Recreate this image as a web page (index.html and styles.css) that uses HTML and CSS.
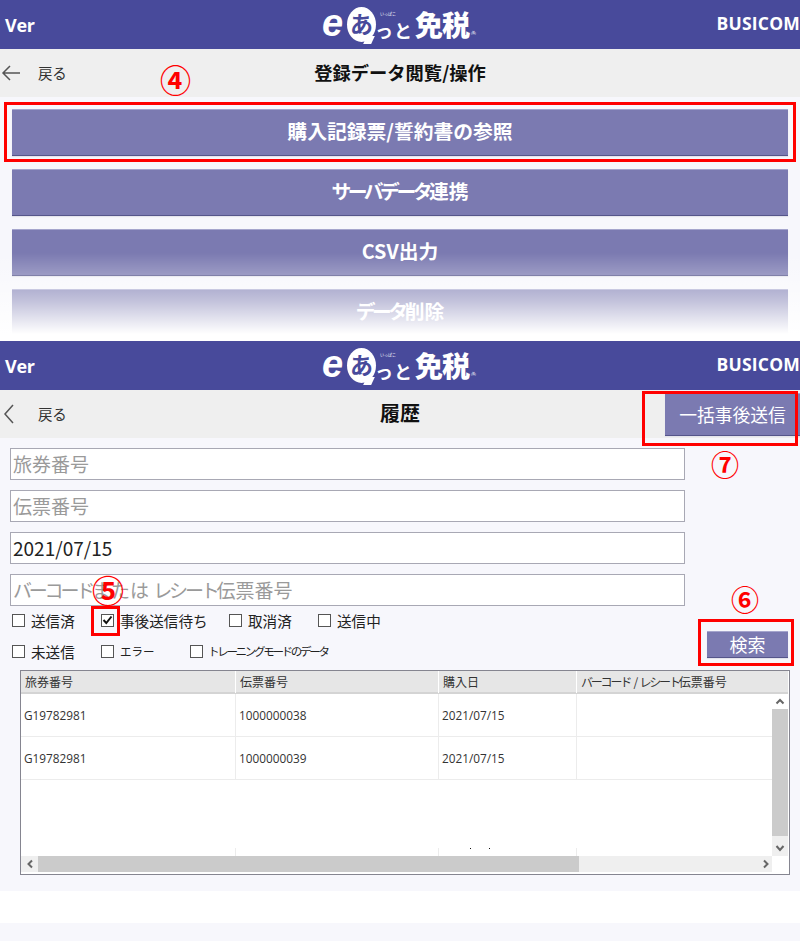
FILE: index.html
```html
<!DOCTYPE html>
<html lang="ja">
<head>
<meta charset="utf-8">
<title>eあっと免税</title>
<link rel="stylesheet" href="styles.css">
</head>
<body>
<section class="screen screen-menu">
  <header class="topbar">
    <span class="ver">Ver</span>
    <div class="logo"><span class="logo-e">e</span><span class="logo-bubble">あ</span><span class="logo-kana">っと</span><span class="logo-kanji">免税</span><span class="logo-ruby">いっぱこ</span><span class="logo-mark">(株)</span></div>
    <span class="brand">BUSICOM</span>
  </header>
  <div class="subbar">
    <div class="back"><svg class="back-icon" width="20" height="16" viewBox="0 0 20 16"><path d="M9 1 2 8l7 7M2 8h17" fill="none" stroke="#555" stroke-width="1.500"/></svg><span>戻る</span></div>
    <h1 class="title">登録データ閲覧/操作</h1>
  </div>
  <div class="menu">
    <button class="menu-btn">購入記録票/誓約書の参照</button>
    <button class="menu-btn"><span class="tight">サーバデータ</span>連携</button>
    <button class="menu-btn">CSV出力</button>
    <button class="menu-btn"><span class="tight">データ</span>削除</button>
  </div>
  <div class="fade"></div>
  <div class="mark mark-4"></div>
  <span class="num num-4">④</span>
</section>

<section class="screen screen-history">
  <header class="topbar">
    <span class="ver">Ver</span>
    <div class="logo"><span class="logo-e">e</span><span class="logo-bubble">あ</span><span class="logo-kana">っと</span><span class="logo-kanji">免税</span><span class="logo-ruby">いっぱこ</span><span class="logo-mark">(株)</span></div>
    <span class="brand">BUSICOM</span>
  </header>
  <div class="subbar">
    <div class="back"><svg class="back-icon" width="20" height="22" viewBox="0 0 20 22"><path d="M12 2 4 11l8 9" fill="none" stroke="#555" stroke-width="1.500"/></svg><span>戻る</span></div>
    <h1 class="title title-large">履歴</h1>
    <button class="bulk-btn">一括事後送信</button>
  </div>
  <div class="form">
    <div class="fields">
      <div class="field placeholder">旅券番号</div>
      <div class="field placeholder">伝票番号</div>
      <div class="field">2021/07/15</div>
      <div class="field placeholder"><span class="tight-input">バーコード</span>または <span class="tight-input">レシート</span>伝票番号</div>
    </div>
    <div class="filters">
      <div class="check-row">
        <label class="check c1"><i class="box"></i>送信済</label>
        <label class="check c2"><i class="box checked"><svg width="11" height="10" viewBox="0 0 11 10"><path d="M1.500 5 4.300 8 9.500 1.500" fill="none" stroke="#111" stroke-width="2"/></svg></i>事後送信待ち</label>
        <label class="check c3"><i class="box"></i>取消済</label>
        <label class="check c4"><i class="box"></i>送信中</label>
      </div>
      <div class="check-row">
        <label class="check c1"><i class="box"></i>未送信</label>
        <label class="check c2b"><i class="box"></i><span class="small">エラー</span></label>
        <label class="check c3b"><i class="box"></i><span class="tiny">トレーニングモードのデータ</span></label>
      </div>
      <button class="search-btn">検索</button>
    </div>
    <div class="table">
      <div class="row head"><div>旅券番号</div><div>伝票番号</div><div>購入日</div><div><span class="tight-head">バーコード / レシート</span>伝票番号</div></div>
      <div class="viewport">
        <div class="rows">
          <div class="row data"><div>G19782981</div><div>1000000038</div><div>2021/07/15</div><div></div></div>
          <div class="row data"><div>G19782981</div><div>1000000039</div><div>2021/07/15</div><div></div></div>
          <div class="gap"></div>
          <div class="row stub"><div></div><div></div><div class="dots"></div><div></div></div>
        </div>
        <div class="vscroll">
          <svg class="arrow-up" width="16" height="15" viewBox="0 0 16 15"><path d="M4.500 9.500 8 6l3.500 3.500" fill="none" stroke="#666" stroke-width="2"/></svg>
          <div class="vthumb"></div>
          <svg class="arrow-v" width="10" height="8" viewBox="0 0 10 8"><path d="M1.500 2 5 6 8.500 2" fill="none" stroke="#666" stroke-width="2"/></svg>
        </div>
      </div>
      <div class="hbar">
        <div class="hscroll">
          <svg class="arrow-h" width="7" height="10" viewBox="0 0 7 10"><path d="M6 1.500 2.500 5 6 8.500" fill="none" stroke="#666" stroke-width="2"/></svg>
          <div class="hthumb"></div>
          <svg class="arrow-h right" width="7" height="10" viewBox="0 0 7 10"><path d="M2 1.500 5.500 5 2 8.500" fill="none" stroke="#666" stroke-width="2"/></svg>
        </div>
        <div class="corner"></div>
      </div>
    </div>
  </div>
  <div class="white-band"></div>
  <div class="tail"></div>
  <div class="mark mark-5"></div>
  <div class="mark mark-6"></div>
  <div class="mark mark-7"></div>
  <span class="num num-5">⑤</span>
  <span class="num num-6">⑥</span>
  <span class="num num-7">⑦</span>
</section>
</body>
</html>
```
FILE: styles.css
```css
* { box-sizing: border-box; }
html, body { margin: 0; padding: 0; }
body {
  width: 800px;
  height: 941px;
  overflow: hidden;
  background: #f7f7fc;
  font-family: "Noto Sans CJK JP", "Noto Sans", sans-serif;
  color: #222;
}
.screen { position: relative; }
.screen-menu { height: 341px; overflow: hidden; }

.topbar {
  position: relative;
  height: 49px;
  background: #484a9b;
  color: #fff;
  display: flex;
  align-items: center;
  justify-content: space-between;
  overflow: hidden;
}
.ver { font: bold 18px/1 "Open Sans", sans-serif; margin-left: 5px; letter-spacing: -0.3px; }
.brand { font: bold 17.500px/1 "Open Sans", sans-serif; margin: -2px 0 0 0; letter-spacing: 0.200px; white-space: nowrap; }
.logo {
  position: absolute;
  left: 322px;
  top: 0;
  width: 160px;
  height: 49px;
  display: flex;
  align-items: center;
}
.logo-e { font: italic bold 38px/1 "Liberation Sans", sans-serif; margin-top: -4px; width: 21px; }
.logo-bubble {
  position: relative;
  width: 29px;
  height: 35px;
  border-radius: 50%;
  background: #fff;
  color: #484a9b;
  font-size: 23px;
  font-weight: 700;
  line-height: 33px;
  text-align: center;
  margin-top: -1px;
  margin-left: 4px;
  flex: none;
}
.logo-bubble::after {
  content: "";
  position: absolute;
  right: 3px;
  bottom: -2px;
  width: 8px;
  height: 8px;
  background: #fff;
  transform: skewX(-25deg);
}
.logo-kana { font-size: 18px; font-weight: 700; line-height: 1; letter-spacing: 1px; margin: 10px 0 0 -1px; flex: none; }
.logo-kanji { font-size: 28px; font-weight: 900; line-height: 1; letter-spacing: -1px; margin: -1px 0 0 2px; flex: none; }
.logo-ruby { position: absolute; left: 58px; top: 12px; font-size: 4px; line-height: 1; white-space: nowrap; }
.logo-mark { position: absolute; left: 149px; top: 32px; font-size: 3px; line-height: 1; white-space: nowrap; }

.subbar {
  position: relative;
  height: 48px;
  background: #efefef;
  display: flex;
  align-items: center;
  justify-content: center;
}
.back {
  position: absolute;
  left: 0;
  top: 0;
  height: 48px;
  display: flex;
  align-items: center;
  font-size: 14.500px;
  color: #333;
}
.back-icon { margin: 0 0 0 1px; }
.back span { margin: -2px 0 0 17px; letter-spacing: -0.3px; }
.title { margin: -2px 0 0; font-size: 18.300px; line-height: 1; font-weight: 700; color: #111; }
.title-large { font-size: 20px; }

.menu { padding: 12px 12px 0; display: flex; flex-direction: column; gap: 14px; }
.menu-btn, .bulk-btn, .search-btn {
  border: 0;
  background: #7b7ab1;
  color: #fff;
  font-family: inherit;
  cursor: pointer;
  box-shadow: inset 0 1px 0 #a5a5cd, 0 1px 0 #55558a, 0 2px 1px #e4e4ec;
}
.menu-btn { height: 46px; font-size: 19.800px; font-weight: 700; padding: 0 0 3px; }
.tight { letter-spacing: -3.500px; }
.fade {
  position: absolute;
  left: 0;
  right: 0;
  bottom: 0;
  height: 88px;
  background: linear-gradient(to bottom, rgba(255,255,255,0), rgba(255,255,255,.55) 55%, #fff 92%);
}

.bulk-btn {
  position: absolute;
  right: 0;
  top: 3px;
  width: 135px;
  height: 42px;
  font-size: 17.800px;
  padding: 0;
}

.form { height: 453px; padding: 10px 0 0; }
.fields { display: flex; flex-direction: column; gap: 10px; padding-left: 10px; }
.field {
  width: 675px;
  height: 32px;
  background: #fff;
  border: 1px solid #a8a8b4;
  font-size: 19px;
  line-height: 30px;
  padding-left: 2px;
  color: #222;
  font-family: "Noto Sans CJK JP", sans-serif;
}
.placeholder { color: #9a9a9a; }
.tight-input { letter-spacing: -3.200px; }

.filters { position: relative; display: flow-root; height: 64px; padding: 0 0 0 12px; }
.check-row { height: 30px; position: relative; display: flex; align-items: center; font-size: 14.600px; }
.filters .check-row:first-child { margin-top: -1px; margin-bottom: 1px; }
.check { display: flex; align-items: center; color: #222; white-space: nowrap; }
.box {
  display: flex;
  align-items: center;
  justify-content: center;
  width: 13px;
  height: 13px;
  border: 1px solid #555;
  background: #fff;
  margin-right: 6px;
}
.c1 { width: 89px; }
.c2 { width: 128px; }
.c3 { width: 89px; }
.c2b { width: 89px; }
.c3b .box { margin-right: 5px; }
.small { font-size: 11.500px; }
.tiny { font-size: 11.500px; letter-spacing: -2.300px; }
.search-btn {
  position: absolute;
  left: 707px;
  top: 25px;
  width: 81px;
  height: 26px;
  font-size: 18px;
  line-height: 26px;
  padding: 0;
}

.table {
  width: 770px;
  height: 205px;
  margin: 0 0 0 20px;
  border: 1px solid #858590;
  background: #fff;
  display: flex;
  flex-direction: column;
  font-size: 12px;
}
.row { display: grid; grid-template-columns: 215px 203px 138px 1fr; }
.row > div { border-right: 1px solid #ececec; padding-left: 3px; }
.row > div:last-child { border-right: 0; }
.head {
  height: 23px;
  background: #e6e6e6;
  border-bottom: 2px solid #d4d4d4;
  line-height: 22px;
  color: #333;
  margin-right: 1px;
}
.head > div { border-right-color: #fff; padding-left: 4px; }
.tight-head { letter-spacing: -2.200px; word-spacing: 3px; }
.viewport { flex: 1; display: flex; min-height: 0; }
.rows { flex: 1; display: flex; flex-direction: column; }
.data { height: 43px; line-height: 43px; border-bottom: 1px solid #ececec; color: #333; font-family: "Open Sans", sans-serif; font-size: 11.800px; }
.gap { flex: 1; }
.stub { height: 8px; }
.dots { position: relative; }
.dots::before, .dots::after {
  content: "";
  position: absolute;
  top: 0;
  width: 1px;
  height: 1px;
  background: #111;
}
.dots::before { left: 31px; }
.dots::after { left: 50px; }
.vscroll { width: 16px; margin-right: 1px; display: flex; flex-direction: column; align-items: center; background: #efefef; }
.arrow-up { flex: none; display: block; background: #fff; }
.vthumb { width: 100%; height: 127px; background: #cbcbcb; margin: 0 0 8px; }
.arrow-v { flex: none; }
.hbar { height: 16px; display: flex; margin-bottom: 2px; }
.hscroll { flex: 1; display: flex; align-items: center; background: #efefef; position: relative; }
.arrow-h { flex: none; margin: 0 5px; width: 7px; }
.hthumb { width: 541px; height: 16px; background: #cbcbcb; }
.arrow-h.right { margin-left: auto; margin-right: 3px; }
.corner { width: 17px; background: #fff; }

.white-band { height: 32px; background: #fff; }
.tail { height: 18px; background: #f7f7fc; }

.mark { position: absolute; border: 3px solid #f00; pointer-events: none; }
.mark-4 { left: 4px; top: 102px; width: 792px; height: 60px; }
.mark-5 { left: 91px; top: 265px; width: 29px; height: 30px; }
.mark-6 { left: 698px; top: 278px; width: 96px; height: 47px; }
.mark-7 { left: 642px; top: 50px; width: 156px; height: 55px; }
.num { position: absolute; color: #f00; line-height: 1; font-family: "Noto Sans CJK JP", sans-serif; font-weight: 700; }
.num-4 { left: 160px; top: 63px; font-size: 31px; }
.num-5 { left: 92px; top: 232px; font-size: 32px; }
.num-6 { left: 731px; top: 244px; font-size: 28px; }
.num-7 { left: 711px; top: 109px; font-size: 28px; }
```
